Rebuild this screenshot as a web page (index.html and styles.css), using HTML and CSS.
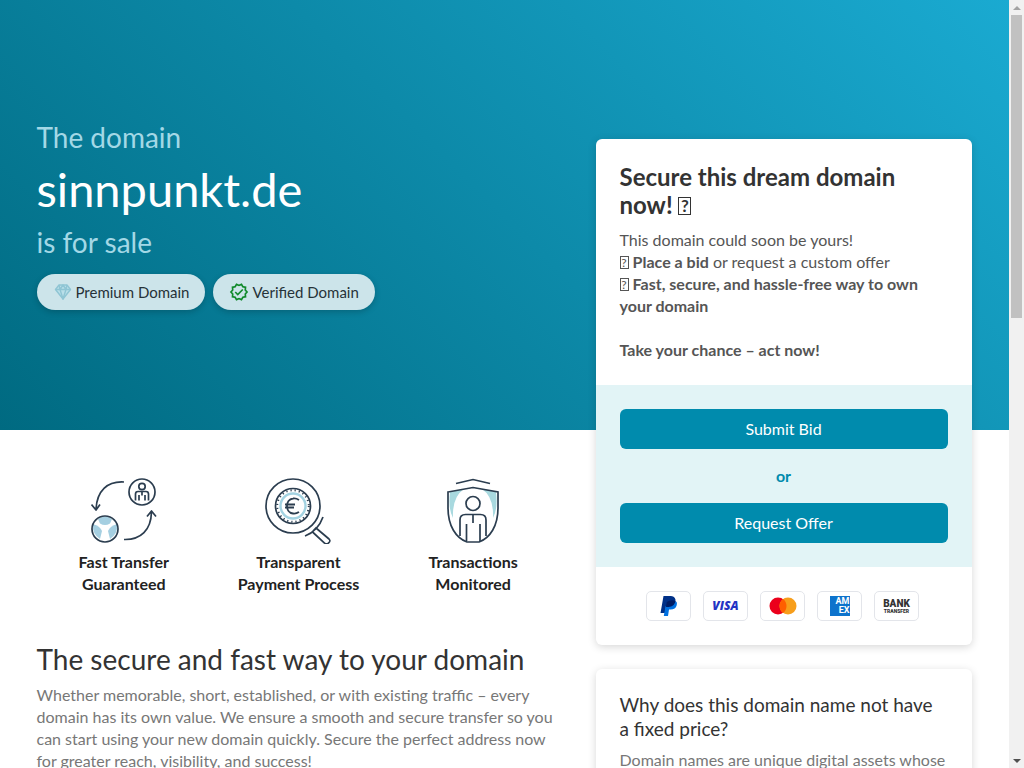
FILE: index.html
```
<!DOCTYPE html>
<html lang="en">
<head>
    <meta charset="UTF-8">
    <meta name="viewport" content="width=device-width, initial-scale=1.0">
    <title>sinnpunkt.de is for sale</title>
    <link rel="stylesheet" href="styles.css">
</head>
<body>
    <div class="page">
        <div class="container">
            <main class="main">
                <header class="hero">
                    <p class="hero-line">The domain</p>
                    <h1 class="hero-domain">sinnpunkt.de</h1>
                    <p class="hero-line">is for sale</p>
                    <div class="badges">
                        <span class="badge">
                            <svg width="20" height="20" viewBox="0 0 20 20" fill="#b9dfe9" stroke="#8fc5d4" stroke-width="1.4" stroke-linejoin="round">
                                <path d="M6 3h8l3.500 4.500L10 17 2.500 7.500z"/>
                                <path d="M2.500 7.500h15M7 7.500 10 17l3-9.500M6 3l1 4.500L10 3l3 4.500L14 3" fill="none"/>
                            </svg>
                            Premium Domain
                        </span>
                        <span class="badge">
                            <svg width="20" height="20" viewBox="0 0 24 24" fill="#118a2b">
                                <path d="M23 12l-2.440-2.780.340-3.680-3.610-.820-1.890-3.180L12 3 8.600 1.540 6.710 4.720l-3.610.810.340 3.680L1 12l2.440 2.780-.340 3.690 3.610.820 1.890 3.180L12 21l3.400 1.460 1.890-3.180 3.610-.820-.340-3.680L23 12zm-4.510 2.110.260 2.790-2.740.620-1.430 2.410L12 18.820l-2.580 1.110-1.430-2.410-2.740-.620.260-2.800L3.660 12l1.850-2.120-.260-2.780 2.740-.610 1.430-2.410L12 5.180l2.580-1.110 1.430 2.410 2.740.620-.260 2.790L20.340 12l-1.850 2.110z"/>
                                <path d="M7.500 12l3 3 6-6" fill="none" stroke="#118a2b" stroke-width="2"/>
                            </svg>
                            Verified Domain
                        </span>
                    </div>
                </header>

                <ul class="features">
                    <li class="feature">
                        <svg width="66" height="66" viewBox="0 0 66 66" fill="none" stroke="#2b3d4f" stroke-width="1.700">
                            <circle cx="51" cy="14" r="13"/>
                            <circle cx="51" cy="8.500" r="3.200"/>
                            <path d="M44.500 22.500V16q0-2.500 2.500-2.500h8q2.500 0 2.500 2.500v6.500M48 22.500V17M54 22.500V17M51 14v3.500"/>
                            <path d="M33 4C16 3 6 13 5 31M.500 26.500 5 32l4-5.500" stroke-linejoin="round"/>
                            <path d="M33 61.500C50 62 60 52 60.500 34M56 38.500l4.500-5.500 4.500 5.500" stroke-linejoin="round"/>
                            <g stroke="none" fill="#a5cfe1">
                                <path d="M7 41q7-5 14 0l-2 4.500q-5 3-10 0z"/>
                                <path d="M2 46q7 2 9 7l-2 8Q1 56 2 46z"/>
                                <path d="M26 46q-7 2-9 7l2 8q8-5 7-15z"/>
                            </g>
                            <circle cx="14" cy="51" r="13"/>
                        </svg>
                        <strong>Fast Transfer<br>Guaranteed</strong>
                    </li>
                    <li class="feature">
                        <svg width="66" height="66" viewBox="0 0 66 66" fill="none" stroke="#2b3d4f" stroke-width="1.700">
                            <circle cx="28" cy="28" r="27"/>
                            <circle cx="28" cy="28" r="17.500"/>
                            <circle cx="28" cy="28" r="15.800" stroke-width="2" stroke-dasharray="1.200 3"/>
                            <circle cx="28" cy="28" r="12.500" stroke="#a3d3e2" stroke-width="2.400"/>
                            <path d="M34 22q-3-2-6-1.500c-8 1-8 14 0 15q3 .500 6-1.500M20 26.500h10M20 29.500h9" stroke-width="1.800"/>
                            <path d="M58 39Q53 53 40 58M48 53l3-3 13 11q2 2-.500 4-2 2-4 0L47 53.500"/>
                        </svg>
                        <strong>Transparent<br>Payment Process</strong>
                    </li>
                    <li class="feature">
                        <svg width="66" height="66" viewBox="0 0 66 66" fill="none" stroke="#2b3d4f" stroke-width="1.700">
                            <path d="M10 14 24 11Q12 19 13 40 8 31 10 14zM56 14l-14-3q12 8 11 29 5-9 3-26z" fill="#a8d9df" stroke="none"/>
                            <path d="M16 5.500 33 1.500l17 4"/>
                            <path d="M8 14 33 9.500 58 14v16c0 18-8 30-19 34H27C16 60 8 48 8 30z"/>
                            <circle cx="33" cy="25.500" r="7"/>
                            <path d="M20 58V42q0-5.500 5.500-5.500h15Q46 36.500 46 42v16M33 37v8M26.500 46v17M40 46v17"/>
                        </svg>
                        <strong>Transactions<br>Monitored</strong>
                    </li>
                </ul>

                <section class="about">
                    <h2 class="about-title">The secure and fast way to your domain</h2>
                    <p>Whether memorable, short, established, or with existing traffic – every domain has its own value. We ensure a smooth and secure transfer so you can start using your new domain quickly. Secure the perfect address now for greater reach, visibility, and success!</p>
                </section>
            </main>

            <aside class="sidebar">
                <section class="card">
                    <div class="card-body">
                        <h2 class="offer-title">Secure this dream domain now! <span class="symbol">?</span></h2>
                        <p class="offer-text">This domain could soon be yours!<br>
                            <span class="symbol">?</span> <strong>Place a bid</strong> or request a custom offer<br>
                            <span class="symbol">?</span> <strong>Fast, secure, and hassle-free way to own your domain</strong><br><br>
                            <strong>Take your chance – act now!</strong></p>
                    </div>
                    <div class="actions">
                        <button type="button" class="btn">Submit Bid</button>
                        <span class="or">or</span>
                        <button type="button" class="btn">Request Offer</button>
                    </div>
                    <div class="payments">
                        <span class="payment">
                            <svg width="18" height="20" viewBox="0 0 18 20">
                                <path d="M3.500 0H11q5 .500 4.500 5.500-1 5.500-7 5.500H6L4.800 17H.500z" fill="#003087"/>
                                <path d="M15.500 5q2 1 1.200 4.200Q15.500 13.500 10.500 13.500H9L8 20H3.800L5.600 10q5 1 8-1.500 1.500-1.500 1.900-3.500z" fill="#0070e0"/>
                                <path d="M15.500 5q-1 5.500-7 6H6L6.800 6q4-3 8.700-1z" fill="#001c64"/>
                            </svg>
                        </span>
                        <span class="payment visa">VISA</span>
                        <span class="payment">
                            <svg width="28" height="18" viewBox="0 0 28 18">
                                <circle cx="9" cy="9" r="8.500" fill="#eb001b"/>
                                <circle cx="19" cy="9" r="8.500" fill="#f79e1b"/>
                                <path d="M14 2.100a8.500 8.500 0 0 1 0 13.800 8.500 8.500 0 0 1 0-13.800z" fill="#ff5f00"/>
                            </svg>
                        </span>
                        <span class="payment"><span class="amex">AM<br>EX</span></span>
                        <span class="payment bank"><span>BANK</span><small>TRANSFER</small></span>
                    </div>
                </section>

                <section class="card">
                    <div class="card-body">
                        <h3 class="info-title">Why does this domain name not have a&nbsp;fixed price?</h3>
                        <p>Domain names are unique digital assets whose</p>
                    </div>
                </section>
            </aside>
        </div>
    </div>
    <div class="scrollbar">
        <span class="arrow arrow-up"></span>
        <span class="track"><span class="thumb"></span></span>
        <span class="arrow arrow-down"></span>
    </div>
</body>
</html>
```
FILE: styles.css
```
* {
    box-sizing: border-box;
}
body {
    display: flex;
    height: 100vh;
    margin: 0;
    overflow: hidden;
    font-family: Lato, "Noto Sans", sans-serif;
    font-size: 16px;
    line-height: 22px;
    color: #777;
    background: #fff;
}
h1, h2, h3, p, ul {
    margin: 0;
    padding: 0;
    font-weight: 400;
}
.page {
    flex: 1;
    overflow: hidden;
    background: linear-gradient(45deg, #006a81, #1aaad1) no-repeat;
    background-size: 100% 430px;
}
.container {
    display: grid;
    grid-template-columns: 7fr 5fr;
    max-width: 960px;
    margin: 0 auto;
}
.main {
    padding: 0 24px 0 12px;
}
.sidebar {
    display: flex;
    flex-direction: column;
    gap: 24px;
    padding: 139px 13px 48px 11px;
}

/* Hero */
.hero {
    display: flex;
    flex-direction: column;
    justify-content: center;
    height: 430px;
}
.hero-line {
    font-size: 28px;
    line-height: 32px;
    color: #a3d8e6;
}
.hero-domain {
    margin: 8px 0;
    font-size: 47px;
    line-height: 57px;
    color: #fff;
}
.badges {
    display: flex;
    gap: 8px;
    margin-top: 16px;
}
.badge {
    display: flex;
    align-items: center;
    gap: 3px;
    height: 36px;
    padding: 0 16px;
    border-radius: 18px;
    font-size: 15px;
    line-height: 20px;
    color: #263238;
    background: #cce4ea;
    box-shadow: 0 2px 6px rgba(0, 0, 0, 0.2);
}

/* Features */
.features {
    display: grid;
    grid-template-columns: repeat(3, 1fr);
    padding: 48px 0;
    list-style: none;
}
.feature {
    display: flex;
    flex-direction: column;
    align-items: center;
    gap: 7px;
    text-align: center;
    color: #222;
}
.about-title {
    margin-bottom: 9px;
    font-size: 28px;
    line-height: 32px;
    color: #333;
}

/* Cards */
.card {
    border-radius: 6px;
    overflow: hidden;
    background: #fff;
    box-shadow: 0 2px 8px rgba(0, 0, 0, 0.16);
}
.card-body {
    padding: 24px;
}
.offer-title {
    margin-bottom: 10px;
    font-size: 24px;
    line-height: 28px;
    font-weight: 700;
    color: #333;
}
.offer-text {
    color: #555;
}
.symbol {
    display: inline-block;
    width: 9px;
    border: 1px solid currentColor;
    font-size: 12px;
    line-height: 11px;
    text-align: center;
    vertical-align: 1px;
}
.offer-title .symbol {
    width: 13px;
    font-size: 17px;
    line-height: 16px;
    vertical-align: 2px;
}
.actions {
    display: flex;
    flex-direction: column;
    gap: 16px;
    padding: 24px;
    text-align: center;
    background: #e2f4f6;
}
.btn {
    height: 40px;
    border: none;
    border-radius: 6px;
    font: inherit;
    color: #fff;
    background: #008bad;
    cursor: pointer;
}
.or {
    font-weight: 700;
    color: #008bad;
}
.info-title {
    margin-bottom: 8px;
    font-size: 19px;
    line-height: 24px;
    color: #333;
}

/* Payment methods */
.payments {
    display: flex;
    justify-content: center;
    gap: 12px;
    padding: 24px 26px 24px 24px;
}
.payment {
    display: flex;
    align-items: center;
    justify-content: center;
    width: 45px;
    height: 30px;
    border: 1px solid #e3e5ea;
    border-radius: 5px;
    background: #fff;
}
.visa {
    font-family: "Open Sans", sans-serif;
    font-size: 12px;
    font-style: italic;
    font-weight: 800;
    color: #2433c4;
}
.amex {
    width: 20px;
    height: 20px;
    padding-top: 1px;
    font-family: Roboto, sans-serif;
    font-size: 9px;
    line-height: 9px;
    font-weight: 700;
    text-align: right;
    color: #fff;
    background: #0d73cc;
}
.bank {
    flex-direction: column;
    font-family: Roboto, sans-serif;
    font-size: 10px;
    line-height: 9px;
    font-weight: 900;
    color: #333;
}
.bank small {
    font-size: 5px;
    line-height: 6px;
}

/* Scrollbar */
.scrollbar {
    display: flex;
    flex-direction: column;
    align-items: center;
    width: 15px;
    background: #f1f1f1;
}
.arrow {
    display: flex;
    align-items: center;
    justify-content: center;
    height: 15px;
}
.arrow::before {
    content: "";
    border: 4px solid transparent;
}
.arrow-up::before {
    border-top: none;
    border-bottom-color: #a3a3a3;
}
.arrow-down::before {
    border-bottom: none;
    border-top-color: #505050;
}
.track {
    flex: 1;
    width: 11px;
}
.thumb {
    display: block;
    height: 41%;
    background: #c1c1c1;
}
```
